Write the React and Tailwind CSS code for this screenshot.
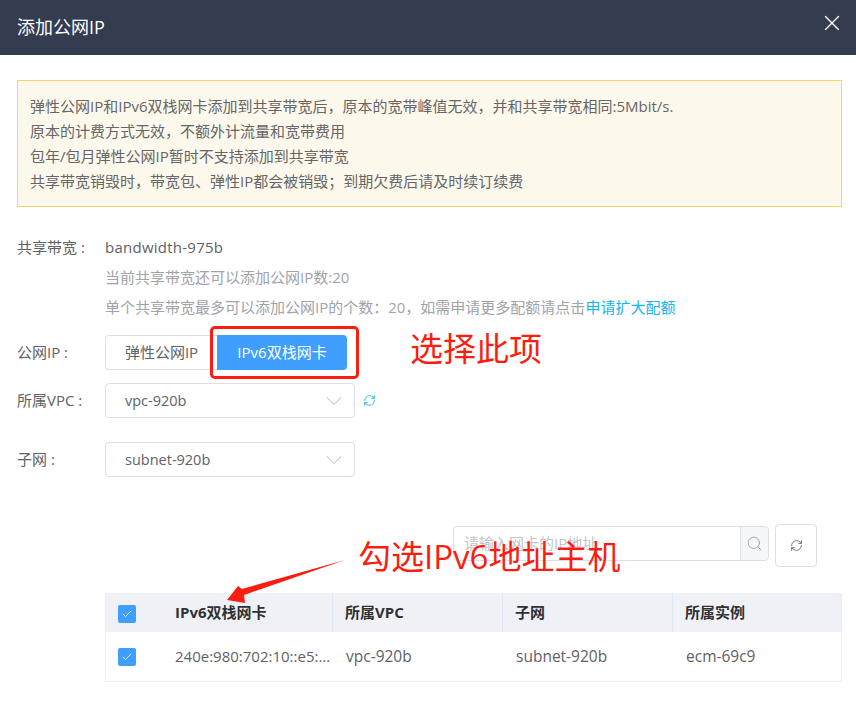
import { ChevronDown, RefreshCw, Search, X, Check } from "lucide-react";

const font = { fontFamily: '"Open Sans", "Noto Sans CJK SC", sans-serif' };

function Select({ value }) {
  return (
    <div className="flex items-center justify-between w-[250px] h-[35px] pl-[19px] pr-[6px] border border-[#dcdfe6] rounded text-[14.5px] text-[#606266]">
      <span>{value}</span>
      <ChevronDown size={28} strokeWidth={0.9} className="text-[#c0c4cc]" />
    </div>
  );
}

function Checkbox() {
  return (
    <div className="flex items-center justify-center w-[18px] h-[18px] rounded-[2px] bg-[#409eff]">
      <Check size={12} strokeWidth={1.5} className="text-white" />
    </div>
  );
}

function Annotations() {
  return (
    <>
      <div className="absolute left-[210px] top-[326px] w-[149px] h-[53px] border-[3px] border-[#fb1e10] rounded-[5px]"></div>
      <div className="absolute left-[410px] top-[326px] text-[33px] leading-[46px] text-[#fb1e10] whitespace-nowrap">选择此项</div>
      <div className="absolute left-[358px] top-[535px] text-[33px] leading-[44px] text-[#fb1e10] whitespace-nowrap">勾选IPv6地址主机</div>
      <svg className="absolute left-[220px] top-[555px]" width="130" height="50" viewBox="0 0 130 50">
        <path d="M7 45 L18 31 L22 34 L125 5 L24 40 L25 48 Z" fill="#fb1e10" />
      </svg>
    </>
  );
}

export default function App() {
  return (
    <div className="relative w-[856px] h-[711px] overflow-hidden bg-white" style={font}>
      <header className="flex items-start justify-between h-[55px] bg-[#343c4f] pl-[17px] pr-[11px]">
        <h1 className="text-[18px] leading-[55px] text-white">添加公网IP</h1>
        <X size={26} strokeWidth={1.3} className="text-white mt-[10px]" />
      </header>

      <div className="mt-[25px] mx-[17px] w-[825px] h-[127px] border border-[#fbd26b] bg-[#fdf8ec] px-[12px] py-[13px] text-[15px] leading-[25px] text-[#666]">
        <p>弹性公网IP和IPv6双栈网卡添加到共享带宽后，原本的宽带峰值无效，并和共享带宽相同:5Mbit/s.</p>
        <p>原本的计费方式无效，不额外计流量和宽带费用</p>
        <p>包年/包月弹性公网IP暂时不支持添加到共享带宽</p>
        <p>共享带宽销毁时，带宽包、弹性IP都会被销毁；到期欠费后请及时续订续费</p>
      </div>

      <div className="mt-[25px] pl-[17px] text-[15px] text-[#606266]">
        <div className="flex h-[30px] items-center">
          <span className="w-[88px]">共享带宽 :</span>
          <span className="tracking-[0.25px]">bandwidth-975b</span>
        </div>
        <div className="pl-[88px] leading-[30px] text-[#a0a3a9]">
          <p>当前共享带宽还可以添加公网IP数:20</p>
          <p>
            单个共享带宽最多可以添加公网IP的个数：20，如需申请更多配额请点击
            <span className="text-[#13b5f1]">申请扩大配额</span>
          </p>
        </div>

        <div className="flex items-center h-[35px] mt-[13px]">
          <span className="w-[88px]">公网IP :</span>
          <div className="flex h-[35px]">
            <div className="flex items-center justify-center w-[112px] border border-[#dcdfe6] border-r-0 rounded-l">弹性公网IP</div>
            <div className="flex items-center justify-center w-[130px] bg-[#409eff] text-white rounded-r">IPv6双栈网卡</div>
          </div>
        </div>

        <div className="flex items-center h-[35px] mt-[13px]">
          <span className="w-[88px]">所属VPC :</span>
          <Select value="vpc-920b" />
          <RefreshCw size={13} strokeWidth={1.8} className="ml-[8px] text-[#2db7f5]" />
        </div>

        <div className="flex items-center h-[35px] mt-[24px]">
          <span className="w-[88px]">子网 :</span>
          <Select value="subnet-920b" />
        </div>

        <div className="flex items-start h-[43px] mt-[47px] pl-[436px]">
          <div className="flex w-[316px] h-[35px] mt-[2px] border border-[#dcdfe6] rounded">
            <div className="flex-1 pl-[10px] leading-[33px] text-[#c0c4cc]">请输入网卡的IP地址</div>
            <div className="flex items-center justify-center w-[28px] bg-[#f5f7fa] border-l border-[#dcdfe6] rounded-r">
              <Search size={17} strokeWidth={1.1} className="text-[#909399]" />
            </div>
          </div>
          <div className="flex items-center justify-center w-[42px] h-[43px] ml-[6px] border border-[#dcdfe6] rounded">
            <RefreshCw size={13} strokeWidth={1.6} className="text-[#606266]" />
          </div>
        </div>

        <div className="mt-[26px] ml-[88px] w-[737px] border-x border-b border-[#ebeef5]">
          <div className="flex h-[39px] items-center bg-[#eff1f7] font-bold text-[#303133]">
            <div className="flex items-center w-[227px] h-full border-r border-[#dfe6f4] pl-[12px] pt-[3px]">
              <Checkbox />
              <span className="ml-[39px] -mt-[3px]">IPv6双栈网卡</span>
            </div>
            <div className="flex items-center w-[170px] h-full border-r border-[#dfe6f4] pl-[12px]">所属VPC</div>
            <div className="flex items-center w-[170px] h-full border-r border-[#dfe6f4] pl-[12px]">子网</div>
            <div className="flex items-center flex-1 h-full pl-[12px]">所属实例</div>
          </div>
          <div className="flex h-[49px] items-center text-[15.5px]">
            <div className="flex items-center w-[227px] h-full pl-[12px]">
              <Checkbox />
              <span className="ml-[39px] whitespace-nowrap text-[15px]">240e:980:702:10::e5:...</span>
            </div>
            <div className="w-[170px] pl-[13px]">vpc-920b</div>
            <div className="w-[170px] pl-[13px]">subnet-920b</div>
            <div className="flex-1 pl-[13px]">ecm-69c9</div>
          </div>
        </div>
      </div>

      <Annotations />
    </div>
  );
}
